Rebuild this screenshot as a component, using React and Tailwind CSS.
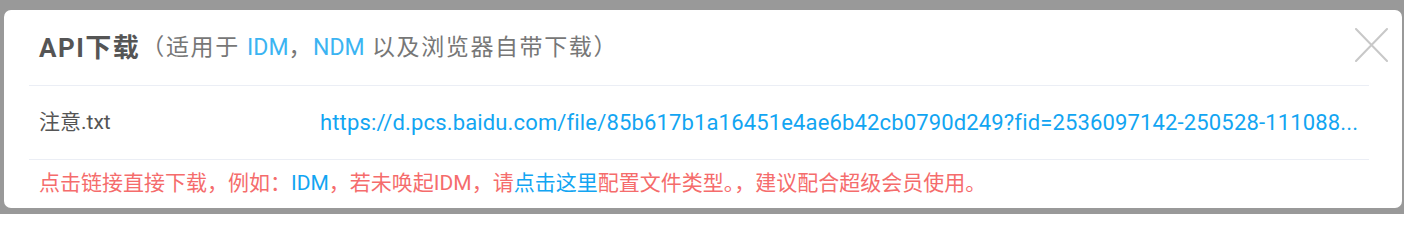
const font = { fontFamily: 'Roboto, "Noto Sans CJK SC", sans-serif' };

export default function App() {
  return (
    <div className="h-[214px] w-full bg-[#999999] pt-[10px] pl-[4px] overflow-hidden" style={font}>
      <div className="relative h-[198px] w-[1398px] rounded-[7px] bg-white pl-[25px] pr-[33px]">
        {/* header */}
        <div className="h-[76px] border-b border-[#ebeef5] flex items-center pl-[10px] pt-[2px]">
          <span className="text-[26px] font-bold tracking-[1.5px] text-[#555555]">API下载</span>
          <span className="text-[23px] tracking-[1.6px] text-[#777777] ml-[1px]">
            （适用于 <span className="text-[#3bb4f2] tracking-normal">IDM</span>，<span className="text-[#3bb4f2] tracking-normal">NDM</span> 以及浏览器自带下载）
          </span>
        </div>
        <button className="absolute top-[18px] right-[14px]">
          <svg width="33" height="34" viewBox="0 0 33 34" fill="none" stroke="#c8c8c8" strokeWidth="2" strokeLinecap="round">
            <path d="M1 1L32 33M32 1L1 33" />
          </svg>
        </button>

        {/* file row */}
        <div className="h-[74px] border-b border-[#ebeef5] flex items-center pl-[10px]">
          <span className="w-[281px] shrink-0 text-[21px] text-[#555555]">注意.txt</span>
          <a className="truncate text-[22px] tracking-[0.15px] text-[#12a5f2]">
            https://d.pcs.baidu.com/file/85b617b1a16451e4ae6b42cb0790d249?fid=2536097142-250528-111088...
          </a>
        </div>

        {/* tips */}
        <div className="h-[48px] flex items-center pl-[10px] text-[21px] text-[#f56c6c]">
          点击链接直接下载，例如：<span className="text-[#12a5f2] text-[21px] align-[4px]">IDM</span>，若未唤起IDM，请<span className="text-[#12a5f2]">点击这里</span>配置文件类型。，建议配合超级会员使用。
        </div>
      </div>
    </div>
  );
}
